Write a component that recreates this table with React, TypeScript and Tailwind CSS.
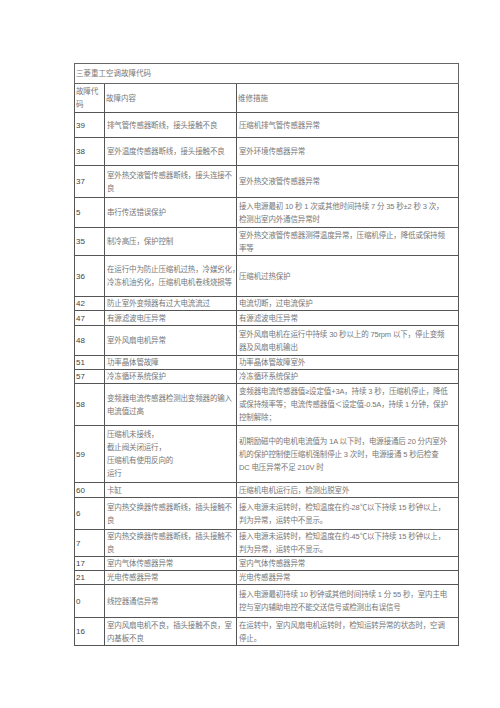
type Row = {
  code: string;
  cause: string[];
  fix: string[];
  h: string;
};

const rows: Row[] = [
  { code: "39", cause: ["排气管传感器断线，接头接触不良"], fix: ["压缩机排气管传感器异常"], h: "h-[25px]" },
  { code: "38", cause: ["室外温度传感器断线，接头接触不良"], fix: ["室外环境传感器异常"], h: "h-[28px]" },
  { code: "37", cause: ["室外热交液管传感器断线，接头连接不", "良"], fix: ["室外热交液管传感器异常"], h: "h-[32px]" },
  {
    code: "5",
    cause: ["串行传送错误保护"],
    fix: ["接入电源最初 10 秒 1 次或其他时间持续 7 分 35 秒±2 秒 3 次，", "检测出室内外通信异常时"],
    h: "h-[30px]",
  },
  {
    code: "35",
    cause: ["制冷高压，保护控制"],
    fix: ["室外热交液管传感器测得温度异常，压缩机停止，降低或保持频", "率等"],
    h: "h-[28px]",
  },
  {
    code: "36",
    cause: ["在运行中为防止压缩机过热，冷媒劣化，", "冷冻机油劣化，压缩机电机卷线烧损等"],
    fix: ["压缩机过热保护"],
    h: "h-[41px]",
  },
  { code: "42", cause: ["防止室外变频器有过大电流流过"], fix: ["电流切断，过电流保护"], h: "h-[14px]" },
  { code: "47", cause: ["有源滤波电压异常"], fix: ["有源滤波电压异常"], h: "h-[15px]" },
  {
    code: "48",
    cause: ["室外风扇电机异常"],
    fix: ["室外风扇电机在运行中持续 30 秒以上的 75rpm 以下，停止变频", "器及风扇电机输出"],
    h: "h-[30px]",
  },
  { code: "51", cause: ["功率晶体管故障"], fix: ["功率晶体管故障室外"], h: "h-[14px]" },
  { code: "57", cause: ["冷冻循环系统保护"], fix: ["冷冻循环系统保护"], h: "h-[14px]" },
  {
    code: "58",
    cause: ["变频器电流传感器检测出变频器的输入", "电流值过高"],
    fix: [
      "变频器电流传感器值≥设定值+3A，持续 3 秒，压缩机停止，降低",
      "或保持频率等；电流传感器值＜设定值-0.5A，持续 1 分钟，保护",
      "控制解除；",
    ],
    h: "h-[42px]",
  },
  {
    code: "59",
    cause: ["压缩机未接线，", "截止阀关闭运行，", "压缩机有使用反向的", "运行"],
    fix: [
      "初期励磁中的电机电流值为 1A 以下时，电源接通后 20 分内室外",
      "机的保护控制使压缩机强制停止 3 次时，电源接通 5 秒后检查",
      "DC 电压异常不足 210V 时",
    ],
    h: "h-[57px]",
  },
  { code: "60", cause: ["卡缸"], fix: ["压缩机电机运行后，检测出脱室外"], h: "h-[15px]" },
  {
    code: "6",
    cause: ["室内热交换器传感器断线，插头接触不", "良"],
    fix: ["接入电源未运转时，检知温度在约-28℃以下持续 15 秒钟以上，", "判为异常，运转中不显示。"],
    h: "h-[32px]",
  },
  {
    code: "7",
    cause: ["室内热交换器传感器断线，插头接触不", "良"],
    fix: ["接入电源未运转时，检知温度在约-45℃以下持续 15 秒钟以上，", "判为异常，运转中不显示。"],
    h: "h-[27px]",
  },
  { code: "17", cause: ["室内气体传感器异常"], fix: ["室内气体传感器异常"], h: "h-[14px]" },
  { code: "21", cause: ["光电传感器异常"], fix: ["光电传感器异常"], h: "h-[14px]" },
  {
    code: "0",
    cause: ["线控器通信异常"],
    fix: ["接入电源最初持续 10 秒钟或其他时间持续 1 分 55 秒，室内主电", "控与室内辅助电控不能交送信号或检测出有误信号"],
    h: "h-[33px]",
  },
  {
    code: "16",
    cause: ["室内风扇电机不良，插头接触不良，室", "内基板不良"],
    fix: ["在运转中，室内风扇电机运转时，检知运转异常的状态时，空调", "停止。"],
    h: "h-[28px]",
  },
];

function Lines({ lines }: { lines: string[] }) {
  return (
    <>
      {lines.map((l, i) => (
        <div key={i} className="whitespace-nowrap tracking-[-0.15px]">
          {l}
        </div>
      ))}
    </>
  );
}

export default function App() {
  return (
    <div
      className="w-[500px] h-[708px] bg-white pt-[63px] pl-[74px] text-[7.5px] leading-[13px] text-[#777]"
      style={{ fontFamily: '"Liberation Sans", "Noto Sans CJK SC", sans-serif' }}
    >
      <table className="table-fixed border-collapse w-[384px]">
        <colgroup>
          <col className="w-[30px]" />
          <col className="w-[132px]" />
          <col className="w-[222px]" />
        </colgroup>
        <tbody>
          {/* title */}
          <tr>
            <td colSpan={3} className="h-[20px] border border-[#666] px-[1px] align-middle">
              三菱重工空调故障代码
            </td>
          </tr>
          {/* header */}
          <tr>
            <td className="h-[29px] border border-[#555] px-[1px] align-middle">
              <Lines lines={["故障代", "码"]} />
            </td>
            <td className="border border-[#555] px-[1px] align-middle">故障内容</td>
            <td className="border border-[#555] px-[1px] align-middle">维修措施</td>
          </tr>
          {rows.map((r) => (
            <tr key={r.code + r.fix[0]}>
              <td className={`${r.h} border border-[#555] px-[1px] align-middle text-[#444] text-[8px]`}>
                {r.code}
              </td>
              <td className="border border-[#555] px-[2px] align-middle">
                <Lines lines={r.cause} />
              </td>
              <td className="border border-[#555] px-[2px] align-middle">
                <Lines lines={r.fix} />
              </td>
            </tr>
          ))}
        </tbody>
      </table>
    </div>
  );
}
